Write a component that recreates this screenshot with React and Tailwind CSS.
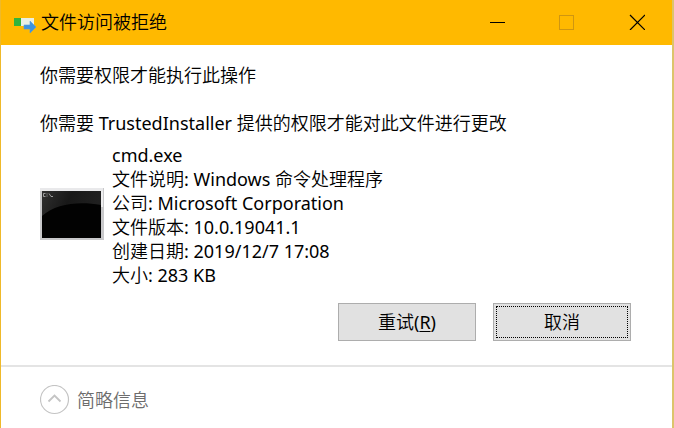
function TransferIcon() {
  return (
    <svg className="h-6 w-6 shrink-0" viewBox="0 0 24 24" aria-hidden="true">
      <rect x="1" y="8" width="20" height="8" fill="#e9efe2" />
      <rect x="1" y="8" width="7" height="8" fill="#32b43c" />
      <path d="M11 15h6v-4l6 6-6 6v-4h-6z" fill="#3f93dd" stroke="#4f9cdf" strokeWidth="0.6" />
    </svg>
  );
}

function ConsoleIcon() {
  return (
    <svg className="mt-[45px] h-[52px] w-16 shrink-0" viewBox="0 0 64 52" aria-hidden="true">
      <defs>
        <linearGradient id="sheen" x1="0" y1="0" x2="1" y2="0.2">
          <stop offset="0" stopColor="#303030" />
          <stop offset="0.5" stopColor="#181818" />
          <stop offset="1" stopColor="#202020" />
        </linearGradient>
      </defs>
      <rect width="64" height="52" fill="#c9c9cb" />
      <rect width="63" height="3" fill="#e9e9eb" />
      <rect x="61" y="3" width="2" height="16" fill="#eeeeef" />
      <rect x="2" y="3" width="59" height="47" fill="#020202" />
      <path d="M2 3h59v14C40 13 16 15 2 28z" fill="url(#sheen)" />
      <path d="M5.5 5.5H3.5v3h2M7 5.5v1M7 7.5v1M9 5.5l2 3h2" fill="none" stroke="#b9b9b9" strokeWidth="0.8" />
    </svg>
  );
}

const captionButton = "flex h-11 w-[70px] items-center justify-center";
const dialogButton =
  "h-[38px] w-[138px] border border-[#adadad] bg-[#e1e1e1] p-[2px] leading-6";

const details = [
  ["文件说明", "Windows 命令处理程序"],
  ["公司", "Microsoft Corporation"],
  ["文件版本", "10.0.19041.1"],
  ["创建日期", "2019/12/7 17:08"],
  ["大小", "283 KB"],
];

export default function App() {
  return (
    <div className="flex min-h-screen flex-col border-r-2 border-l border-r-[#dcc46c] border-l-[#efb92a] bg-white font-['Noto_Sans','Noto_Sans_CJK_SC_DemiLight','Noto_Sans_CJK_SC',sans-serif] text-[18px] leading-6 text-black">
      <header className="flex h-[45px] items-center bg-[#ffb900] pb-[2px] pl-3">
        <TransferIcon />
        <h1 className="ml-1 flex-1">文件访问被拒绝</h1>
        <button type="button" aria-label="最小化" className={captionButton}>
          <svg className="h-4 w-4" viewBox="0 0 16 16" shapeRendering="crispEdges">
            <path d="M1 8.5h15" stroke="#000" />
          </svg>
        </button>
        <button type="button" aria-label="最大化" disabled className={captionButton}>
          <svg className="h-4 w-4" viewBox="0 0 16 16" shapeRendering="crispEdges">
            <path d="M.5 1.5h14v14H.5z" fill="none" stroke="#cf9610" />
          </svg>
        </button>
        <button type="button" aria-label="关闭" className={captionButton}>
          <svg className="h-4 w-4" viewBox="0 0 16 16">
            <path d="M1 1l15 15M16 1l-15 15" stroke="#000" strokeWidth="1.2" />
          </svg>
        </button>
      </header>

      <main className="pt-[18px] pr-[41px] pb-6 pl-[39px]">
        <p>你需要权限才能执行此操作</p>
        <p className="mt-6">你需要 TrustedInstaller 提供的权限才能对此文件进行更改</p>
        <div className="mt-2 flex items-start gap-2">
          <ConsoleIcon />
          <div>
            <p>cmd.exe</p>
            {details.map(([label, value]) => (
              <p key={label}>
                {label}: {value}
              </p>
            ))}
          </div>
        </div>
        <div className="mt-4 flex justify-end gap-[17px]">
          <button type="button" className={dialogButton}>
            重试(<span className="underline underline-offset-2">R</span>)
          </button>
          <button type="button" className={dialogButton}>
            <span className="flex h-full items-center justify-center border border-dotted border-black">
              取消
            </span>
          </button>
        </div>
      </main>

      <footer className="flex-1 border-t-2 border-[#e4e4e4] px-[39px] pt-[18px]">
        <button type="button" className="flex items-center gap-[7px] text-[#6d6d6d]">
          <svg className="h-[30px] w-[30px]" viewBox="0 0 30 30" fill="none" aria-hidden="true">
            <circle cx="14.5" cy="14.5" r="14" stroke="#c4c4c4" strokeWidth="1.2" />
            <path d="M8.5 16.5l6-6 6 6" stroke="#c4c4c4" strokeWidth="1.8" />
          </svg>
          <span>简略信息</span>
        </button>
      </footer>
    </div>
  );
}
